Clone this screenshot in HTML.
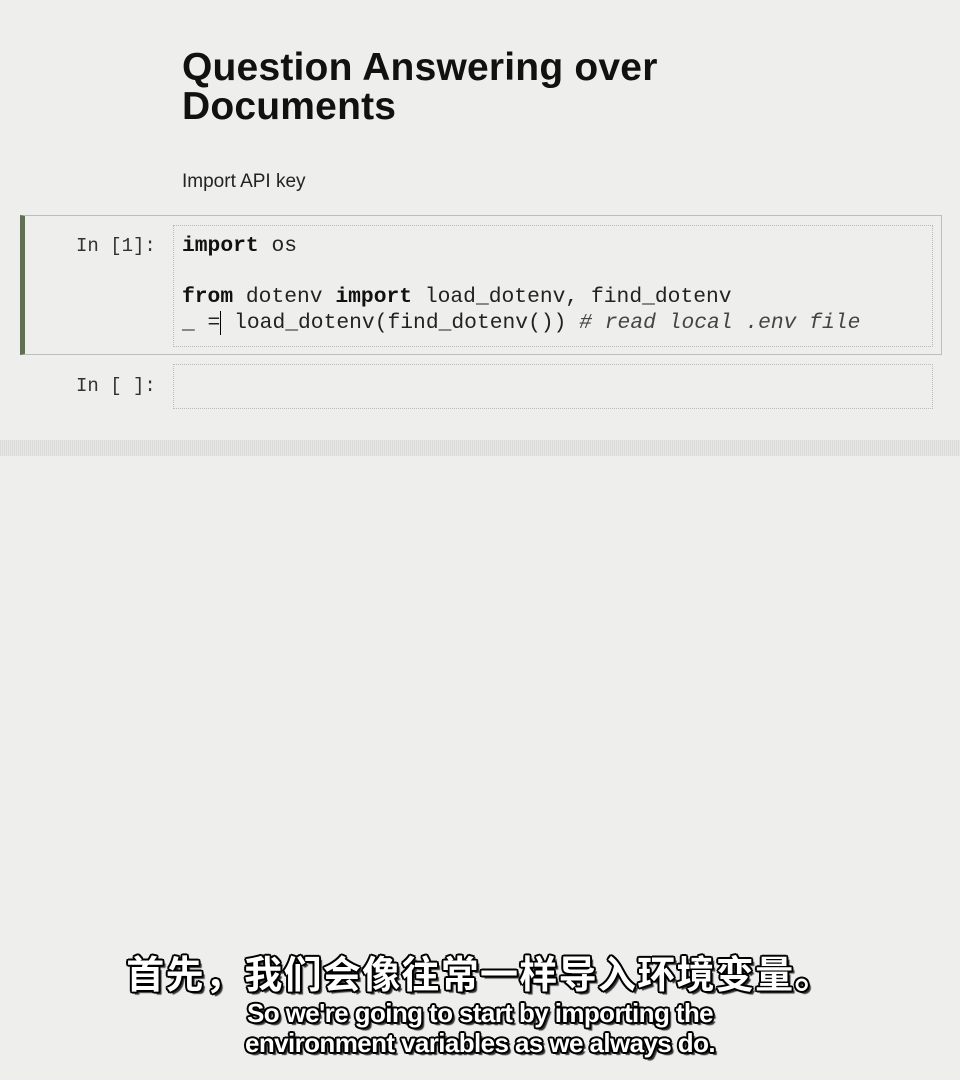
<!DOCTYPE html>
<html><head><meta charset="utf-8"><style>
body{margin:0;width:960px;height:1080px;background:#eeeeec;position:relative;overflow:hidden;font-family:"Liberation Sans",sans-serif}
.t{position:absolute;left:182px;top:48px;font-size:39px;font-weight:bold;line-height:39px;color:#111;letter-spacing:0.2px}
.p{position:absolute;left:182px;top:171px;font-size:19px;color:#222}
.cell{position:absolute;left:20px;top:215px;width:922px;height:140px;border:1px solid #bdbdbd;border-left:5px solid #5f7055;box-sizing:border-box}
.inp{position:absolute;left:173px;border:1px dotted #bbb;box-sizing:border-box;width:760px}
.pr{position:absolute;left:76px;font-family:"Liberation Mono",monospace;font-size:19px;color:#333}
.code{position:absolute;left:182px;top:234px;font-family:"Liberation Mono",monospace;font-size:21.3px;line-height:25.5px;color:#222;white-space:pre}
b{color:#111}
i{color:#444}
.strip{position:absolute;left:0;top:440px;width:960px;height:16px;background:repeating-linear-gradient(90deg,#d8d8d6 0 1px,#e6e6e4 1px 2px);opacity:.9}
.sub{position:absolute;left:0;width:960px;text-align:center;color:#fff;font-weight:bold;
text-shadow:-1.5px -1.5px 0 #000,1.5px -1.5px 0 #000,-1.5px 1.5px 0 #000,1.5px 1.5px 0 #000,0 2px 0 #000,2px 0 0 #000,-2px 0 0 #000,0 -2px 0 #000,3px 3px 1px #333}
</style></head><body>
<div class="t">Question Answering over<br>Documents</div>
<div class="p">Import API key</div>
<div class="cell"></div>
<div class="inp" style="top:225px;height:122px"></div>
<div class="pr" style="top:235px">In [1]:</div>
<div class="code"><b>import</b> os

<b>from</b> dotenv <b>import</b> load_dotenv, find_dotenv
_ =<span style="border-left:1.5px solid #000"></span> load_dotenv(find_dotenv()) <i># read local .env file</i></div>
<div class="inp" style="top:364px;height:45px"></div>
<div class="pr" style="top:375px">In [ ]:</div>
<div class="strip"></div>
<div class="sub" style="top:944px;font-size:38px;font-family:'Noto Sans CJK SC',sans-serif;letter-spacing:1.3px">首先，我们会像往常一样导入环境变量。</div>
<div class="sub" style="top:998px;font-size:26px;letter-spacing:-0.6px;line-height:30px">So we're going to start by importing the<br>environment variables as we always do.</div>
</body></html>
